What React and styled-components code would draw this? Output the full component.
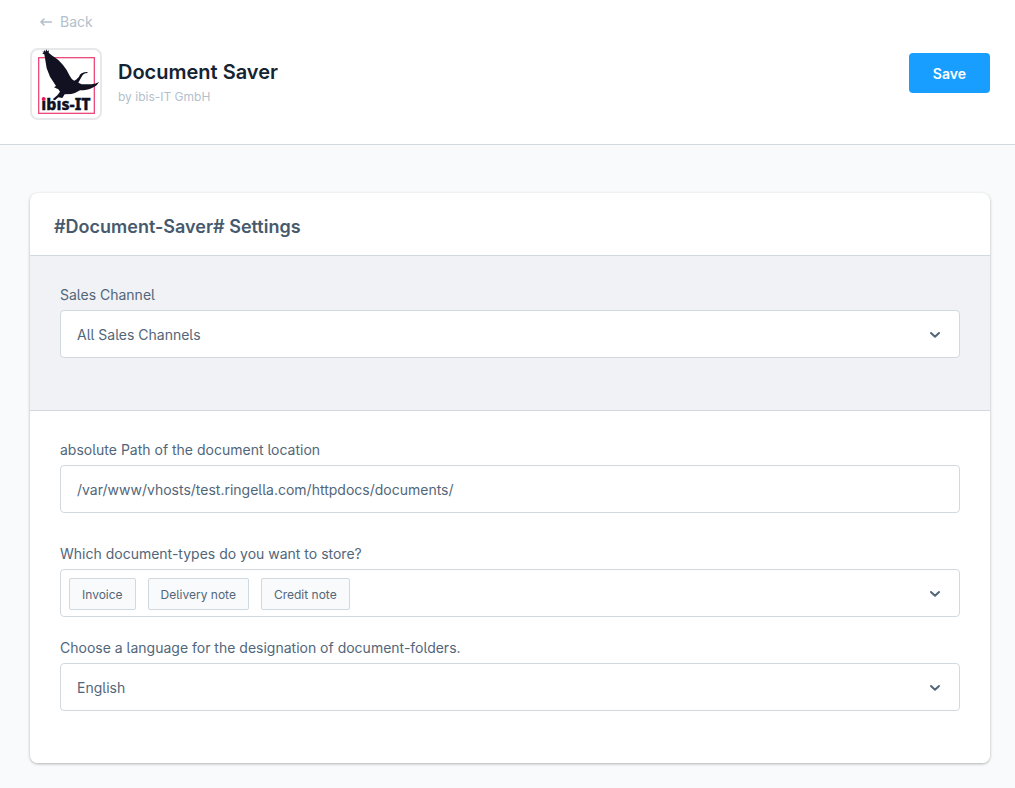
import React, { useState } from 'react'
import { styled, createGlobalStyle } from 'styled-components'

const GlobalStyle = createGlobalStyle`
* {
  box-sizing: border-box;
}

body {
  margin: 0;
  background-color: #f9fafb;
  color: #52667a;
  font-family: Inter, "Liberation Sans", sans-serif;
  font-size: 14px;
  font-feature-settings: "cv05";
}
`;

const Header = styled.header`
background-color: #fff;
border-bottom: 1px solid #d1d9e0;
padding: 12px 25px 24px 30px;
`;

const BackLink = styled.a`
display: flex;
align-items: center;
gap: 8px;
width: fit-content;
height: 18px;
margin-left: 10px;
color: #b3bfcc;
text-decoration: none;
`;

const HeaderRow = styled.div`
display: flex;
align-items: flex-start;
gap: 16px;
margin-top: 18px;
`;

const LogoFrame = styled.div`
width: 72px;
height: 72px;
border: 2px solid #e6e8ea;
border-radius: 8px;
flex: none;
`;

const LogoImage = styled.svg`
display: block;
overflow: visible;
`;

const Heading = styled.div`
flex: 1;
padding-top: 10px;
`;

const Title = styled.h1`
margin: 0;
color: #142433;
font-size: 20px;
font-weight: 600;
line-height: 28px;
`;

const Author = styled.p`
margin: 2px 0 0;
color: #b3bfcc;
font-size: 12px;
line-height: 18px;
`;

const SaveButton = styled.button`
height: 40px;
margin-top: 5px;
padding: 0 24px;
border: none;
border-radius: 4px;
background-color: #189eff;
color: #fff;
font: inherit;
font-weight: 600;
cursor: pointer;
`;

const Content = styled.main`
padding: 48px 25px 25px 30px;
`;

const Card = styled.section`
background-color: #fff;
border-radius: 8px;
box-shadow: 0 1px 3px rgba(0, 0, 0, 0.3);
overflow: hidden;
`;

const CardTitle = styled.h2`
margin: 0;
padding: 20px 24px 14px;
border-bottom: 1px solid #d1d9e0;
color: #475a6d;
font-size: 18px;
font-weight: 600;
line-height: 28px;
`;

const Section = styled.div`
padding: 30px;
background-color: ${(props) => (props.$muted ? "#f0f2f5" : "#fff")};
border-bottom: ${(props) => (props.$muted ? "1px solid #d1d9e0" : "none")};
`;

const Field = styled.div`
margin-bottom: ${(props) => (props.$spaced ? "32px" : "22px")};
`;

const Label = styled.label`
display: block;
margin-bottom: 6px;
line-height: 18px;
`;

const TextInput = styled.input`
display: block;
width: 100%;
height: 48px;
padding: 0 16px;
border: 1px solid #d1d9e0;
border-radius: 4px;
background-color: #fff;
color: inherit;
font: inherit;
font-feature-settings: inherit;
`;

const SelectWrap = styled.div`
display: grid;
align-items: center;

> * {
  grid-area: 1 / 1;
}
`;

const Select = styled.select`
appearance: none;
width: 100%;
height: 48px;
padding: 0 48px 0 16px;
border: 1px solid #d1d9e0;
border-radius: 4px;
background-color: #fff;
color: inherit;
font: inherit;
font-feature-settings: inherit;
`;

const Arrow = styled.svg`
justify-self: end;
margin-right: 17px;
pointer-events: none;
`;

const MultiSelect = styled.div`
display: flex;
align-items: flex-start;
min-height: 48px;
padding: 8px 0 6px 8px;
border: 1px solid #d1d9e0;
border-radius: 4px;
`;

const ChipList = styled.ul`
display: flex;
flex-wrap: wrap;
flex: 1;
gap: 12px;
margin: 0;
padding: 0;
list-style: none;
`;

const Chip = styled.li`
height: 32px;
padding: 0 12px;
border: 1px solid #d1d9e0;
border-radius: 2px;
background-color: #f9fafb;
font-size: 12px;
line-height: 32px;
`;

const ToggleButton = styled.button`
display: flex;
align-items: center;
height: 30px;
padding: 0;
border: none;
background: none;
color: inherit;
cursor: pointer;

${Arrow} {
  margin-right: 16px;
}
`;

function Chevron() {
  return (
    <Arrow width="16" height="16" viewBox="0 0 16 16" fill="none" stroke="#52667a" strokeWidth="2" strokeLinecap="round" strokeLinejoin="round" aria-hidden="true">
      <path d="M4 7 8 10.8 12 7" />
    </Arrow>
  )
}

function Logo() {
  return (
    <LogoImage width="68" height="68" viewBox="0 0 204 204" role="img" aria-label="ibis-IT">
      <rect x="20" y="23" width="167" height="167" fill="none" stroke="#ec4c7c" strokeWidth="4" />
      <path fill="#111122" d="M36 -1 L40 5 L43 -2 L46 4 L51 1 L50 8 L58 15 L79 30 L93 45 L104 60 L113 77 L120 88 L127 92 L134 88 L141 80 Q145 66 166 66 L167 69 Q153 70 149 80 L143 91 L139 98 L149 103 L179 103 Q192 102 201 96 Q195 108 181 113 Q166 121 144 121 Q132 129 118 132 L98 133 L91 144 L79 142 L69 151 L62 148 L76 136 L84 125 L79 118 L66 112 L72 108 L54 80 L44 55 L39 25 L37 13 L31 11 L35 7 L30 4 L36 5 Z" />
      <text x="28" y="181" fill="#111122" stroke="#111122" strokeWidth="1" fontFamily="Noto Sans, sans-serif" fontSize="48" fontWeight="800">ıbıs-IT</text>
      <circle cx="35" cy="147" r="6" fill="#e8175d" />
    </LogoImage>
  )
}

const documentTypes = ["Invoice", "Delivery note", "Credit note"];

function App() {
  const [path, setPath] = useState("/var/www/vhosts/test.ringella.com/httpdocs/documents/");

  return (
    <>
      <GlobalStyle />
      <Header>
        <BackLink href="#">
          <svg width="12" height="10" viewBox="0 0 12 10" fill="none" stroke="currentColor" strokeWidth="1.6" strokeLinecap="round" strokeLinejoin="round" aria-hidden="true">
            <path d="M11.3 6H1M4 3 1 6 4 9" />
          </svg>
          Back
        </BackLink>
        <HeaderRow>
          <LogoFrame><Logo /></LogoFrame>
          <Heading>
            <Title>Document Saver</Title>
            <Author>by ibis-IT GmbH</Author>
          </Heading>
          <SaveButton>Save</SaveButton>
        </HeaderRow>
      </Header>
      <Content>
        <Card>
          <CardTitle>#Document-Saver# Settings</CardTitle>
          <Section $muted>
            <Field>
              <Label htmlFor="channel">Sales Channel</Label>
              <SelectWrap>
                <Select id="channel">
                  <option>All Sales Channels</option>
                </Select>
                <Chevron />
              </SelectWrap>
            </Field>
          </Section>
          <Section>
            <Field $spaced>
              <Label htmlFor="path">absolute Path of the document location</Label>
              <TextInput id="path" type="text" value={path} onChange={(e) => setPath(e.target.value)} />
            </Field>
            <Field>
              <Label htmlFor="types">Which document-types do you want to store?</Label>
              <MultiSelect>
                <ChipList>
                  {documentTypes.map((type) => <Chip key={type}>{type}</Chip>)}
                </ChipList>
                <ToggleButton id="types" type="button"><Chevron /></ToggleButton>
              </MultiSelect>
            </Field>
            <Field>
              <Label htmlFor="language">Choose a language for the designation of document-folders.</Label>
              <SelectWrap>
                <Select id="language">
                  <option>English</option>
                </Select>
                <Chevron />
              </SelectWrap>
            </Field>
          </Section>
        </Card>
      </Content>
    </>
  )
}

export default App
